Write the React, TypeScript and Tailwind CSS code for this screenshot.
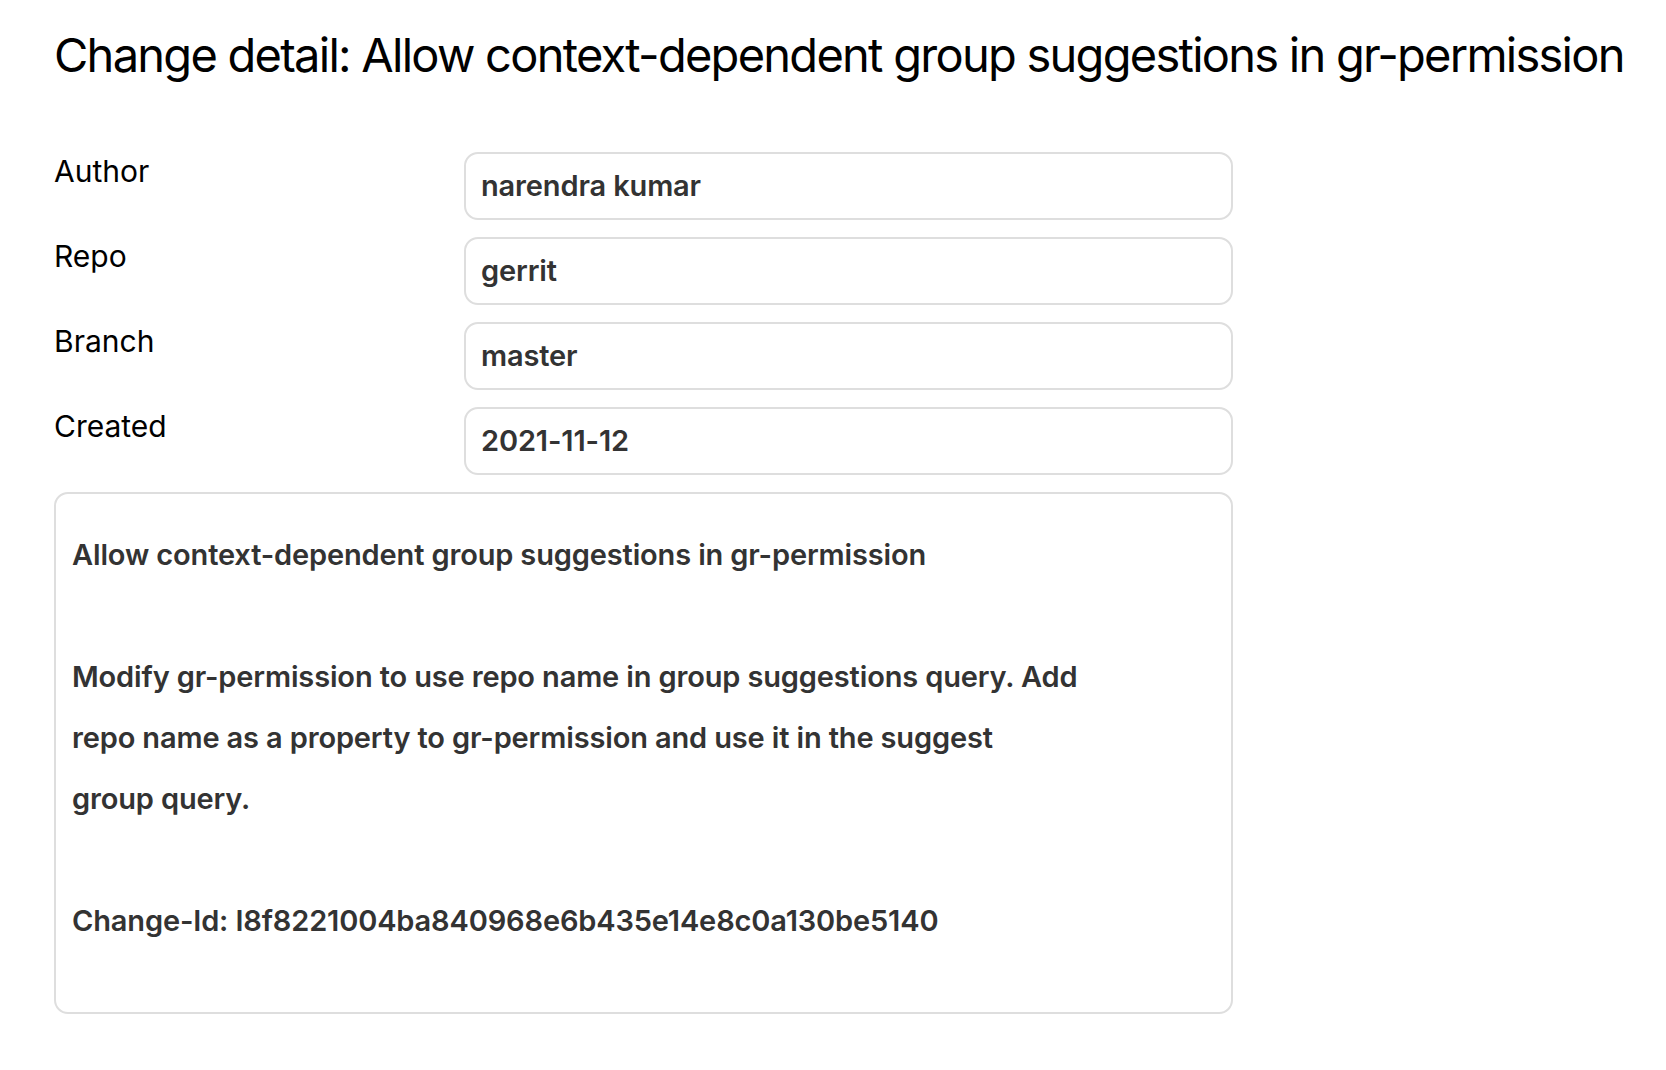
const fields = [
  { label: "Author", value: "narendra kumar" },
  { label: "Repo", value: "gerrit" },
  { label: "Branch", value: "master" },
  { label: "Created", value: "2021-11-12" },
];

const message = `Allow context-dependent group suggestions in gr-permission

Modify gr-permission to use repo name in group suggestions query. Add
repo name as a property to gr-permission and use it in the suggest
group query.

Change-Id: I8f8221004ba840968e6b435e14e8c0a130be5140`;

export default function App() {
  return (
    <div className="min-h-screen bg-white px-[54px] pt-[26px] font-['Inter',sans-serif] text-black">
      <h1 className="whitespace-nowrap text-[47px] leading-[58px] font-normal tracking-[-0.037em]">
        Change detail: Allow context-dependent group suggestions in gr-permission
      </h1>

      <div className="mt-[68px] flex w-[1179px] flex-col gap-[17px]">
        {fields.map((f) => (
          <div key={f.label} className="flex">
            <div className="w-[410px] text-[30px] leading-[38px]">{f.label}</div>
            <div className="flex h-[68px] flex-1 items-center rounded-[14px] border-2 border-[#dedede] px-[15px] text-[29px] font-semibold tracking-[-0.005em] text-[#333]">
              {f.value}
            </div>
          </div>
        ))}

        <div className="rounded-[14px] border-2 border-[#dedede] px-[16px] pt-[30px] pb-[61px]">
          <p className="whitespace-pre-wrap text-[29px] leading-[61px] font-semibold tracking-[-0.005em] text-[#333]">
            {message}
          </p>
        </div>
      </div>
    </div>
  );
}
